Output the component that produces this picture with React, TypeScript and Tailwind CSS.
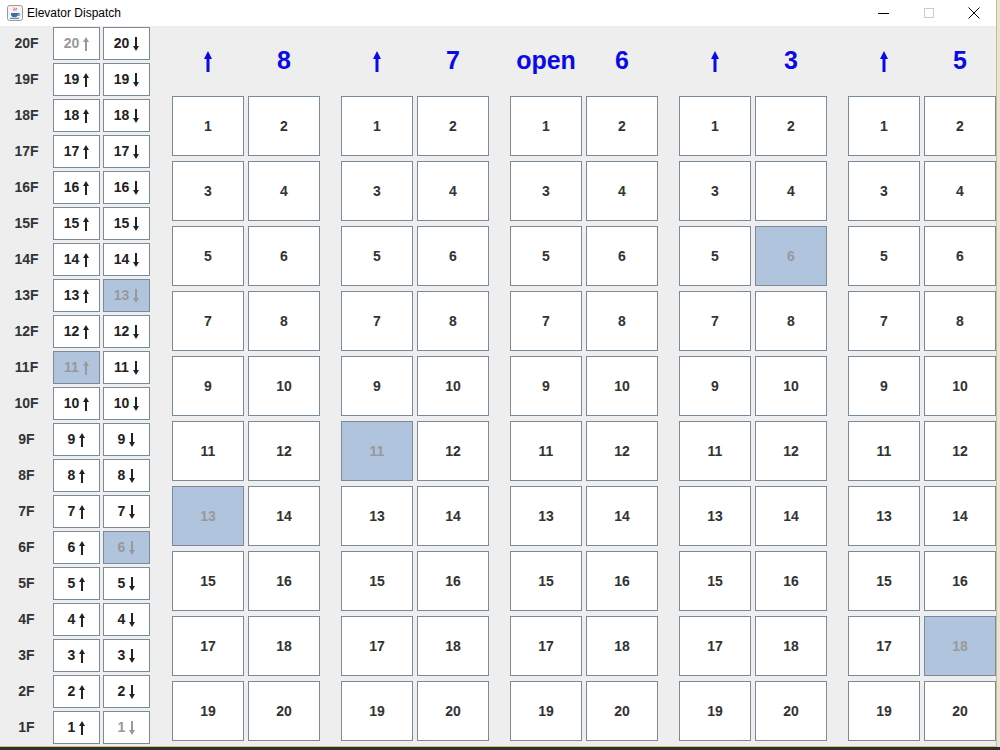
import React from "react";

type Elevator = { dir: "up" | "open"; floor: number; lit: number };

const elevators: Elevator[] = [
  { dir: "up", floor: 8, lit: 13 },
  { dir: "up", floor: 7, lit: 11 },
  { dir: "open", floor: 6, lit: 0 },
  { dir: "up", floor: 3, lit: 6 },
  { dir: "up", floor: 5, lit: 18 },
];

// floor call buttons that are pressed
const upPressed = [11];
const downPressed = [13, 6];

const font = { fontFamily: '"Liberation Sans", Arial, sans-serif' };

function JavaIcon() {
  return (
    <svg width="16" height="16" viewBox="0 0 16 16">
      <rect x="0.5" y="0.5" width="15" height="15" rx="2" fill="#f4f4f4" stroke="#9a9a9a" />
      <path d="M7 2.5c1.5 1.2-1.2 2 0 3.3M9 3c1.2 1-1 1.6 0 2.6" stroke="#e04020" strokeWidth="1" fill="none" />
      <path d="M4 8h7v1.6c0 1.6-1.4 2.6-3.5 2.6S4 11.2 4 9.6z" fill="#3a6ea5" />
      <path d="M11 8.6h1.2c.9 0 .9 1.8-.3 1.8H11" stroke="#3a6ea5" fill="none" />
      <rect x="3" y="12.8" width="9" height="1" fill="#3a6ea5" />
    </svg>
  );
}

function Arrow({ down = false, w, h, shaft }: { down?: boolean; w: number; h: number; shaft: number }) {
  const head = Math.round(h * 0.38);
  const x0 = (w - shaft) / 2;
  const d = `M${w / 2} 0L${w} ${head}H${x0 + shaft}V${h}H${x0}V${head}H0Z`;
  return (
    <svg width={w} height={h} viewBox={`0 0 ${w} ${h}`} className={down ? "rotate-180" : ""}>
      <path d={d} fill="currentColor" />
    </svg>
  );
}

function CallButton({ n, down, pressed, disabled }: { n: number; down: boolean; pressed: boolean; disabled: boolean }) {
  return (
    <div
      className={`w-[47px] h-[33px] border border-[#7a8a99] flex items-center justify-center gap-[4px] text-[14px] font-bold ${
        pressed ? "bg-[#b0c4de]" : "bg-white"
      } ${pressed || disabled ? "text-[#999999]" : "text-[#222222]"}`}
    >
      <span>{n}</span>
      <Arrow down={down} w={6} h={14} shaft={2} />
    </div>
  );
}

export default function App() {
  const floors = Array.from({ length: 20 }, (_, i) => 20 - i);
  const cells = Array.from({ length: 20 }, (_, i) => i + 1);

  return (
    <div className="w-[1000px] h-[750px] bg-[#2a3034] flex flex-col overflow-hidden" style={font}>
      <div className="flex h-[747px]">
        <div className="w-[997px] h-[747px] flex flex-col border-r border-b border-[#d9bd63]">
          {/* title bar */}
          <div className="h-[26px] bg-white flex items-center shrink-0">
            <div className="ml-[7px] mr-[4px] flex items-center">
              <JavaIcon />
            </div>
            <span className="text-[12px] text-black">Elevator Dispatch</span>
            <div className="ml-auto flex items-center h-full">
              <div className="w-[45px] h-full flex items-center justify-center">
                <div className="w-[11px] h-px bg-black" />
              </div>
              <div className="w-[45px] h-full flex items-center justify-center">
                <div className="w-[10px] h-[10px] border border-[#cccccc]" />
              </div>
              <div className="w-[45px] h-full flex items-center justify-center">
                <svg width="12" height="12" viewBox="0 0 12 12">
                  <path d="M0.5 0.5L11.5 11.5M11.5 0.5L0.5 11.5" stroke="#000" strokeWidth="1" />
                </svg>
              </div>
            </div>
          </div>

          {/* content */}
          <div className="flex-1 bg-[#eeeeee] flex">
            {/* floor call panel */}
            <div className="flex flex-col gap-[3px] pt-[1px]">
              {floors.map((f) => (
                <div key={f} className="flex items-center h-[33px]">
                  <div className="w-[53px] text-center text-[14px] font-bold text-[#333333]">{f}F</div>
                  <CallButton n={f} down={false} pressed={upPressed.includes(f)} disabled={f === 20} />
                  <div className="w-[3px]" />
                  <CallButton n={f} down={true} pressed={downPressed.includes(f)} disabled={f === 1} />
                </div>
              ))}
            </div>

            {/* elevators */}
            <div className="flex gap-[21px] ml-[22px]">
              {elevators.map((e, idx) => (
                <div key={idx} className="w-[148px] flex flex-col">
                  <div className="h-[70px] flex items-center text-[#0a0ae6] font-bold text-[25px]">
                    <div className="w-[72px] flex justify-center">
                      {e.dir === "open" ? <span>open</span> : <Arrow w={8} h={21} shaft={3} />}
                    </div>
                    <div className="w-[4px]" />
                    <div className="w-[72px] text-center">{e.floor}</div>
                  </div>
                  <div className="grid grid-cols-[72px_72px] gap-x-[4px] gap-y-[5px]">
                    {cells.map((c) => (
                      <div
                        key={c}
                        className={`h-[60px] border border-[#7a8a99] flex items-center justify-center text-[14px] font-bold ${
                          e.lit === c ? "bg-[#b0c4de] text-[#999999]" : "bg-white text-[#333333]"
                        }`}
                      >
                        {c}
                      </div>
                    ))}
                  </div>
                </div>
              ))}
            </div>
          </div>
        </div>
        <div className="flex-1 bg-[#e4e4e4]" />
      </div>
      <div className="flex-1 bg-[#2a3034]" />
    </div>
  );
}
